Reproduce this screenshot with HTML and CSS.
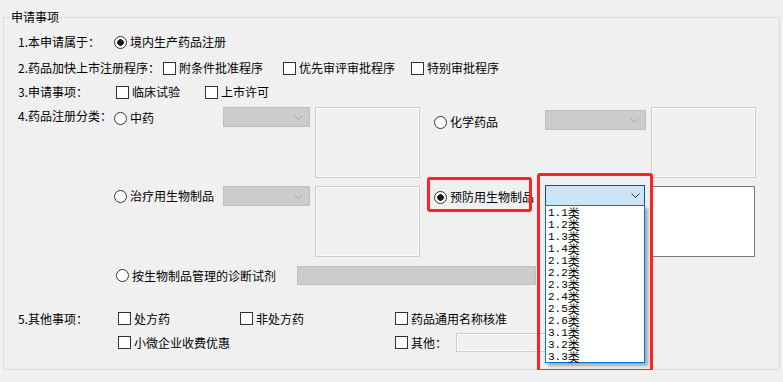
FILE: index.html
```html
<!DOCTYPE html>
<html lang="zh-CN">
<head>
    <meta charset="UTF-8">
    <title>申请事项</title>
    <link rel="stylesheet" href="styles.css">
</head>
<body>

<fieldset class="group">
    <legend>申请事项</legend>
    <div class="form">

        <div class="row r1">
            <span class="label">1.本申请属于：</span>
            <label class="opt"><span class="radio on"></span>境内生产药品注册</label>
        </div>

        <div class="row r2">
            <span class="label">2.药品加快上市注册程序：</span>
            <label class="opt w120"><span class="check"></span>附条件批准程序</label>
            <label class="opt w128"><span class="check"></span>优先审评审批程序</label>
            <label class="opt"><span class="check"></span>特别审批程序</label>
        </div>

        <div class="row r3">
            <span class="label">3.申请事项：</span>
            <label class="opt w89"><span class="check"></span>临床试验</label>
            <label class="opt"><span class="check"></span>上市许可</label>
        </div>

        <!-- 药品注册分类 -->
        <div class="kinds">
            <span class="label tall">4.药品注册分类：</span>

            <label class="opt tall"><span class="radio"></span>中药</label>
            <div class="combo"><svg width="9" height="5"><polyline points="0.5,0.5 4.5,4.5 8.5,0.5"/></svg></div>
            <div class="box"></div>
            <label class="opt tall down"><span class="radio"></span>化学药品</label>
            <div class="combo wide down3"><svg width="9" height="5"><polyline points="0.5,0.5 4.5,4.5 8.5,0.5"/></svg></div>
            <div class="box"></div>

            <label class="opt b-col2"><span class="radio"></span>治疗用生物制品</label>
            <div class="combo"><svg width="9" height="5"><polyline points="0.5,0.5 4.5,4.5 8.5,0.5"/></svg></div>
            <div class="box"></div>
            <label class="opt tall marked"><span class="radio on"></span>预防用生物制品<span class="mark"></span></label>
            <div class="combo active">
                <svg width="9" height="5"><polyline points="0.5,0.5 4.5,4.5 8.5,0.5"/></svg>
                <ul class="list">
                    <li>1.1<span>类</span></li>
                    <li>1.2<span>类</span></li>
                    <li>1.3<span>类</span></li>
                    <li>1.4<span>类</span></li>
                    <li>2.1<span>类</span></li>
                    <li>2.2<span>类</span></li>
                    <li>2.3<span>类</span></li>
                    <li>2.4<span>类</span></li>
                    <li>2.5<span>类</span></li>
                    <li>2.6<span>类</span></li>
                    <li>3.1<span>类</span></li>
                    <li>3.2<span>类</span></li>
                    <li>3.3<span>类</span></li>
                </ul>
                <span class="mark big"></span>
            </div>
            <div class="box live"></div>

            <div class="rowc">
                <label class="opt w183"><span class="radio"></span>按生物制品管理的诊断试剂</label>
                <div class="box off"></div>
            </div>
        </div>

        <!-- 其他事项 -->
        <div class="misc">
            <span class="label">5.其他事项：</span>
            <label class="opt"><span class="check"></span>处方药</label>
            <label class="opt"><span class="check"></span>非处方药</label>
            <label class="opt"><span class="check"></span>药品通用名称核准</label>

            <label class="opt c2"><span class="check"></span>小微企业收费优惠</label>
            <div class="other">
                <label class="opt w61"><span class="check"></span>其他：</label>
                <div class="box flat"></div>
            </div>
        </div>

    </div>
</fieldset>

</body>
</html>
```

FILE: styles.css
```css
body {
    margin: 0;
    padding: 8px 0 0 3px;
    background-color: #f0f0f0;
    font-family: "Noto Sans CJK SC", "Microsoft YaHei", sans-serif;
    font-size: 12px;
    color: #000;
}
.group {
    width: 777px;
    box-sizing: border-box;
    margin: 0;
    padding: 0 0 17px 6px;
    border: 1px solid #dcdcdc;
    min-width: 0;
}
.group legend {
    padding: 0 1px;
    line-height: 18px;
}
.form {
    padding-left: 8px;
}
.row {
    display: flex;
    align-items: center;
    height: 18px;
}
.r1 { margin-top: 7px; }
.r2 { margin-top: 8px; }
.r3 { margin-top: 6px; }
.label {
    flex: none;
    width: 96px;
    white-space: nowrap;
    line-height: 18px;
}
.r2 .label { width: 145px; }
.r3 .label { width: 98px; }

/* radio / checkbox */
.opt {
    display: flex;
    align-items: center;
    gap: 3px;
    white-space: nowrap;
    line-height: 18px;
}
.radio, .check {
    flex: none;
    width: 13px;
    height: 13px;
    box-sizing: border-box;
    border: 1px solid #333;
    background: #fff;
}
.radio { border-radius: 50%; }
.radio.on {
    background: radial-gradient(circle, #1a1a1a 0 3px, #fff 3.6px);
}
.w61 { width: 61px; }
.w89 { width: 89px; }
.w120 { width: 120px; }
.w128 { width: 128px; }
.w183 { width: 181px; margin-left: 2px; }

/* registration kinds */
.kinds {
    position: relative;
    display: grid;
    grid-template-columns: 96px 109px 92px 119px 111px 106px 104px;
    grid-template-rows: 79px 80px 19px;
    align-items: start;
    margin-top: 6px;
}
.kinds .tall { height: 22px; }
.kinds .down { margin-top: 4px; }
.kinds .down3 { margin-top: 3px; }
.b-col2 {
    grid-column: 2;
    height: 20px;
}
.combo {
    display: flex;
    align-items: center;
    justify-content: flex-end;
    width: 87px;
    height: 20px;
    box-sizing: border-box;
    padding-right: 6px;
    border: 1px solid #bfbfbf;
    background: #ccc;
}
.combo svg { fill: none; stroke: #a6a6a6; }
.combo.wide { width: 101px; }
.combo.active {
    position: relative;
    width: 100px;
    height: 21px;
    margin-top: -1px;
    padding-right: 4px;
    border-color: #005499;
    background: #cce4f7;
}
.combo.active svg { stroke: #333; }
.box {
    width: 105px;
    height: 71px;
    box-sizing: border-box;
    border: 1px solid #cdcdcd;
    box-shadow: inset 0 0 0 1px #fbfbfb;
    background: #f0f0f0;
}
.box.live {
    width: 104px;
    background: #fff;
    border-color: #7a7a7a;
    box-shadow: none;
}
.rowc {
    grid-column: 2 / 8;
    grid-row: 3;
    display: flex;
    align-items: center;
    height: 19px;
}
.box.off {
    width: 239px;
    height: 19px;
    border-color: #bfbfbf;
    box-shadow: none;
    background: #ccc;
}

/* open dropdown */
.list {
    position: absolute;
    left: -1px;
    top: 19px;
    z-index: 2;
    width: 100px;
    height: 158px;
    box-sizing: border-box;
    margin: 0;
    padding: 1px 0 0 2px;
    list-style: none;
    border: 1px solid #0078d7;
    background: #fff;
    box-shadow: 3px 3px 3px rgba(0, 0, 0, 0.3);
    font-family: "Liberation Mono", monospace;
    font-size: 11px;
}
.list li {
    display: flex;
    align-items: center;
    height: 12px;
    line-height: 12px;
}
.list span {
    font-family: "Noto Sans CJK SC", sans-serif;
    font-size: 12px;
    line-height: 12px;
}

/* red highlight frames */
.marked { position: relative; }
.mark {
    position: absolute;
    left: -7px;
    top: -9px;
    width: 105px;
    height: 35px;
    box-sizing: border-box;
    border: 3px solid #ff2323;
    border-radius: 3px;
}
.mark.big {
    left: -9px;
    top: -13px;
    width: 116px;
    height: 199px;
    z-index: 3;
}

/* other items */
.misc {
    display: grid;
    grid-template-columns: 100px 122px 155px auto;
    grid-template-rows: 19px 19px;
    row-gap: 5px;
    align-items: center;
    margin-top: 24px;
}
.misc .c2 { grid-column: 2 / 4; }
.other {
    display: flex;
    align-items: center;
}
.box.flat {
    width: 150px;
    height: 19px;
}
```
